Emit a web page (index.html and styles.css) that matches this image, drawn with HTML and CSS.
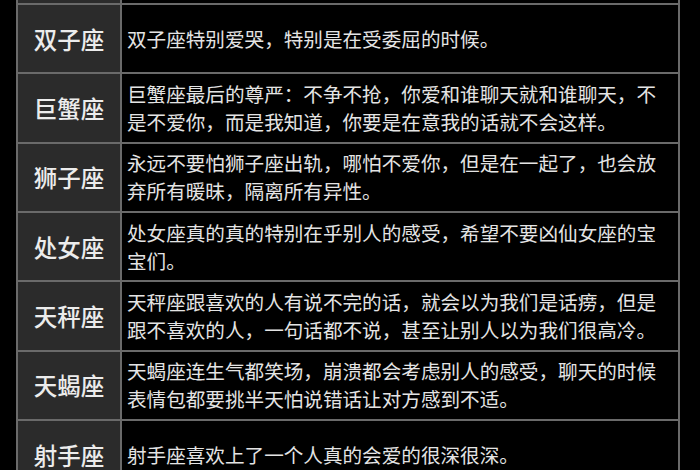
FILE: index.html
```html
<!DOCTYPE html>
<html lang="zh-CN">
<head>
<meta charset="utf-8">
<title>星座</title>
<link rel="stylesheet" href="styles.css">
</head>
<body>
<div class="table">
  <div class="row stub"><div class="name"></div><div class="desc"></div></div>
  <div class="row"><div class="name">双子座</div><div class="desc">双子座特别爱哭，特别是在受委屈的时候。</div></div>
  <div class="row"><div class="name">巨蟹座</div><div class="desc">巨蟹座最后的尊严：不争不抢，你爱和谁聊天就和谁聊天，不是不爱你，而是我知道，你要是在意我的话就不会这样。</div></div>
  <div class="row"><div class="name">狮子座</div><div class="desc">永远不要怕狮子座出轨，哪怕不爱你，但是在一起了，也会放弃所有暖昧，隔离所有异性。</div></div>
  <div class="row"><div class="name">处女座</div><div class="desc">处女座真的真的特别在乎别人的感受，希望不要凶仙女座的宝宝们。</div></div>
  <div class="row"><div class="name">天秤座</div><div class="desc">天秤座跟喜欢的人有说不完的话，就会以为我们是话痨，但是跟不喜欢的人，一句话都不说，甚至让别人以为我们很高冷。</div></div>
  <div class="row"><div class="name">天蝎座</div><div class="desc">天蝎座连生气都笑场，崩溃都会考虑别人的感受，聊天的时候表情包都要挑半天怕说错话让对方感到不适。</div></div>
  <div class="row"><div class="name">射手座</div><div class="desc">射手座喜欢上了一个人真的会爱的很深很深。</div></div>
</div>
</body>
</html>
```
FILE: styles.css
```css
html, body {
  margin: 0;
  padding: 0;
  background: #000;
  height: 100%;
  overflow: hidden;
}
body {
  font-family: "Noto Sans CJK SC", "Noto Sans", sans-serif;
  color: #e4e4e4;
}
.table {
  margin-left: 16px;
  width: 664px;
  border-left: 2px solid #6a6a6a;
  border-right: 2px solid #6a6a6a;
  box-sizing: border-box;
}
.row {
  display: grid;
  grid-template-columns: 104px 1fr;
  height: 69.33px;
  border-bottom: 2px solid #6a6a6a;
  box-sizing: border-box;
}
.row.stub {
  height: 5px;
}
.name {
  background: #2b2b2b;
  border-right: 2px solid #6a6a6a;
  display: flex;
  align-items: center;
  justify-content: center;
  font-size: 23.5px;
  font-weight: 500;
  color: #ececec;
}
.desc {
  display: flex;
  align-items: center;
  padding: 0 6px 0 5px;
  font-size: 19.6px;
  line-height: 28px;
}
```
